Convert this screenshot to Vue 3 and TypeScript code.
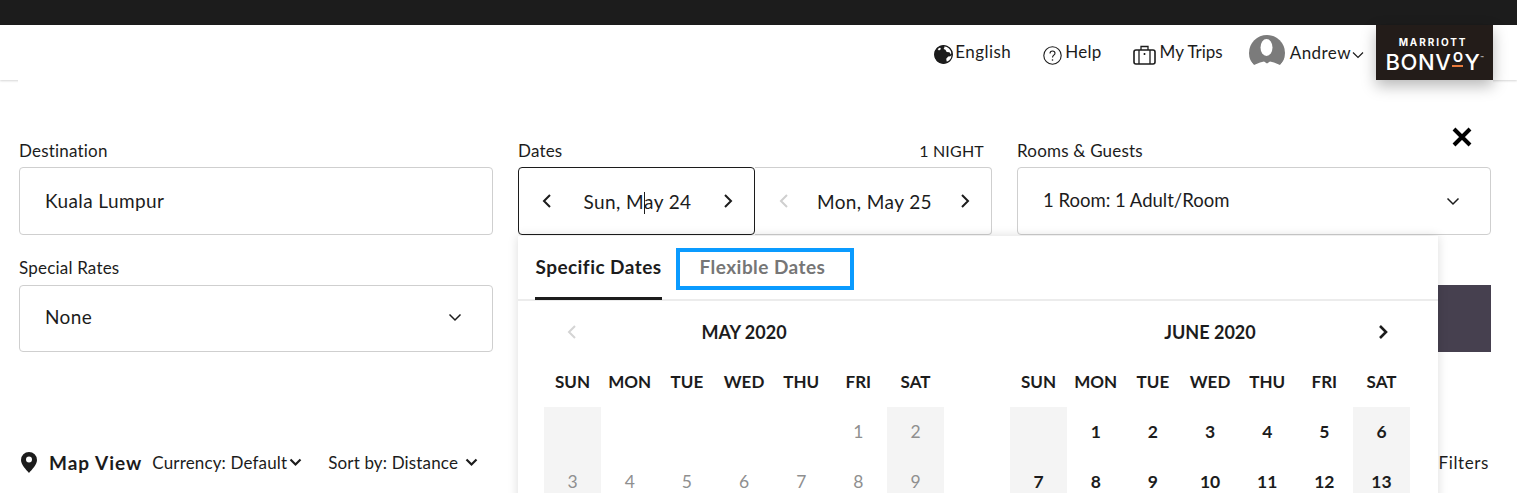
<script setup lang="ts">
const may: { d: string; we: boolean }[][] = [
  ['', '', '', '', '', '1', '2'],
  ['3', '4', '5', '6', '7', '8', '9'],
].map((r) => r.map((d, i) => ({ d, we: i === 0 || i === 6 })))
const june: { d: string; we: boolean }[][] = [
  ['', '1', '2', '3', '4', '5', '6'],
  ['7', '8', '9', '10', '11', '12', '13'],
].map((r) => r.map((d, i) => ({ d, we: i === 0 || i === 6 })))
const days = ['SUN', 'MON', 'TUE', 'WED', 'THU', 'FRI', 'SAT']
const months = [
  { name: 'MAY 2020', rows: may, past: true },
  { name: 'JUNE 2020', rows: june, past: false },
]
</script>

<template>
  <div class="page">
    <div class="topbar"></div>
    <header class="nav">
      <a class="nav-item globe-item">
        <svg class="ic" width="19" height="19" viewBox="0 0 19 19">
          <circle cx="9.500" cy="9.500" r="9.200" fill="#1c1c1c" />
          <path d="M10.500 1c3.500.6 6.300 3 7.400 6.200l-1 2.300-1.500-2.300-2.700-.3-1.300-2.200-1.800-.6.700-1.400z" fill="#fff" />
          <path d="M17.900 10c.2 2.800-1 5.300-3.200 7l-2-.4-.5-2.800 2-2.300 2.200-.3z" fill="#fff" />
          <path d="M3.500 4l2.500-1.500 1 1.500-2 1.500z" fill="#fff" />
          <circle cx="9.500" cy="9.500" r="8.800" fill="none" stroke="#1c1c1c" stroke-width="1.200" />
        </svg>
        <span class="t-en">English</span>
      </a>
      <a class="nav-item help-item">
        <svg class="ic help-ic" width="19" height="19" viewBox="0 0 19 19">
          <circle cx="9.500" cy="9.500" r="8.700" fill="none" stroke="#1c1c1c" stroke-width="1.100" />
          <path d="M7 7.400c0-1.500 1.100-2.400 2.500-2.400s2.500.9 2.500 2.200c0 2-2.500 2-2.500 4.300" fill="none" stroke="#1c1c1c" stroke-width="1.100" />
          <circle cx="9.500" cy="14" r=".8" fill="#1c1c1c" />
        </svg>
        <span>Help</span>
      </a>
      <a class="nav-item trips-item">
        <svg class="ic trips-ic" width="23" height="20" viewBox="0 0 23 20">
          <rect x="1" y="5" width="21" height="14" rx="2" fill="none" stroke="#1c1c1c" stroke-width="1.600" />
          <path d="M8 5V1.500h7V5M6 5v14M17 5v14" fill="none" stroke="#1c1c1c" stroke-width="1.300" />
          <rect x="10.700" y="8" width="1.600" height="2" fill="#1c1c1c" />
        </svg>
        <span class="t-trips">My Trips</span>
      </a>
      <a class="nav-item user-item">
        <svg class="avatar" width="36" height="36" viewBox="0 0 36 36">
          <defs>
            <clipPath id="av"><circle cx="18" cy="18" r="18" /></clipPath>
          </defs>
          <g clip-path="url(#av)">
            <path d="M0 0h36v24l-5 6-6-2.500-4-1-3 2-3-2-4 1-6 2.500-5-6z" fill="#7b7b7b" />
            <ellipse cx="17.500" cy="12.500" rx="6" ry="8.500" fill="#fff" />
          </g>
        </svg>
        <span class="user-name">Andrew</span>
        <svg class="user-chev" width="12" height="8" viewBox="0 0 12 8">
          <path d="M1 1.500l5 5 5-5" fill="none" stroke="#1c1c1c" stroke-width="1.200" />
        </svg>
      </a>
      <div class="logo">
        <span class="logo-top">MARRIOTT</span>
        <span class="logo-main">BONV<span class="logo-o">O</span>Y<span class="logo-tm">™</span></span>
      </div>
    </header>

    <main class="content">
      <button class="close" aria-label="Close">
        <svg width="22" height="20" viewBox="0 0 22 20">
          <path d="M3 2l16 16M19 2L3 18" stroke="#000" stroke-width="4" fill="none" />
        </svg>
      </button>

      <section class="form">
        <div class="field">
          <label class="label">Destination</label>
          <div class="box box-text">Kuala Lumpur</div>
        </div>
        <div class="field">
          <div class="label label-row"><span>Dates</span><span class="night">1 NIGHT</span></div>
          <div class="dates">
            <div class="date date-on">
              <svg class="ch" width="10" height="16" viewBox="0 0 10 16"><path d="M8 2L2 8l6 6" fill="none" stroke="#1c1c1c" stroke-width="2" /></svg>
              <span class="date-text">Sun, M<span class="caret"></span>ay 24</span>
              <svg class="ch" width="10" height="16" viewBox="0 0 10 16"><path d="M2 2l6 6-6 6" fill="none" stroke="#1c1c1c" stroke-width="2" /></svg>
            </div>
            <div class="date date-off">
              <svg class="ch" width="10" height="16" viewBox="0 0 10 16"><path d="M8 2L2 8l6 6" fill="none" stroke="#cfcfcf" stroke-width="2" /></svg>
              <span class="date-text">Mon, May 25</span>
              <svg class="ch" width="10" height="16" viewBox="0 0 10 16"><path d="M2 2l6 6-6 6" fill="none" stroke="#1c1c1c" stroke-width="2" /></svg>
            </div>
          </div>
        </div>
        <div class="field">
          <label class="label">Rooms &amp; Guests</label>
          <div class="box box-select rooms">
            <span>1 Room: 1 Adult/Room</span>
            <svg width="14" height="9" viewBox="0 0 14 9"><path d="M1.500 1.500L7 7l5.500-5.500" fill="none" stroke="#1c1c1c" stroke-width="1.500" /></svg>
          </div>
        </div>

        <div class="field field-2">
          <label class="label label-2">Special Rates</label>
          <div class="box box-select box-2">
            <span>None</span>
            <svg width="14" height="9" viewBox="0 0 14 9"><path d="M1.500 1.500L7 7l5.500-5.500" fill="none" stroke="#1c1c1c" stroke-width="1.500" /></svg>
          </div>
        </div>
        <div class="field-2 spacer"></div>
        <div class="field-2 submit-wrap"><div class="submit"></div></div>
      </section>

      <section class="filters">
        <svg class="pin" width="16" height="21" viewBox="0 0 16 21">
          <path d="M8 0a8 8 0 0 1 8 8c0 4.500-5 9.500-8 13-3-3.500-8-8.500-8-13a8 8 0 0 1 8-8z" fill="#1c1c1c" />
          <circle cx="8" cy="7.500" r="3" fill="#fff" />
        </svg>
        <strong class="map">Map View</strong>
        <span class="filter-a">Currency: Default</span>
        <svg class="fch" width="13" height="9" viewBox="0 0 13 9"><path d="M1.500 1.500l5 5 5-5" fill="none" stroke="#1c1c1c" stroke-width="2.200" /></svg>
        <span class="filter-b">Sort by: Distance</span>
        <svg class="fch fch-b" width="13" height="9" viewBox="0 0 13 9"><path d="M1.500 1.500l5 5 5-5" fill="none" stroke="#1c1c1c" stroke-width="2.200" /></svg>
        <span class="filter-c">Filters</span>
      </section>

      <div class="popup">
        <div class="tabs">
          <div class="tab tab-on">Specific Dates</div>
          <div class="tab tab-flex">Flexible Dates</div>
        </div>
        <div class="cal">
          <div v-for="(m, mi) in months" :key="m.name" class="month">
            <div class="month-head">
              <svg v-if="mi === 0" class="m-prev" width="10" height="16" viewBox="0 0 10 16"><path d="M8 2L2 8l6 6" fill="none" stroke="#d4d4d4" stroke-width="2" /></svg>
              <span>{{ m.name }}</span>
              <svg v-if="mi === 1" class="m-next" width="11" height="16" viewBox="0 0 11 16"><path d="M2 2l6 6-6 6" fill="none" stroke="#1c1c1c" stroke-width="2.600" /></svg>
            </div>
            <div class="grid">
              <div v-for="d in days" :key="d" class="wd">{{ d }}</div>
              <template v-for="(r, ri) in m.rows" :key="ri">
                <div
                  v-for="(c, ci) in r"
                  :key="ci"
                  class="day"
                  :class="{ we: c.we, past: m.past }"
                >{{ c.d }}</div>
              </template>
            </div>
          </div>
        </div>
      </div>
    </main>
  </div>
</template>

<style>
html, body { margin: 0; background: #fff; }
</style>

<style scoped>
.page {
  width: 1517px;
  height: 493px;
  overflow: hidden;
  position: relative;
  font-family: "Lato", "Open Sans", sans-serif;
  color: #1c1c1c;
  background: #fff;
}
.topbar { height: 25px; background: #1c1c1c; }
.nav {
  height: 55px;
  display: flex;
  justify-content: flex-end;
  align-items: flex-start;
  padding-right: 24px;
  background: #fff;
  box-shadow: 0 1px 2px rgba(0, 0, 0, 0.16);
  font-size: 17px;
  letter-spacing: 0.3px;
  position: relative;
}
.nav-item {
  display: flex;
  align-items: center;
  height: 56px;
  position: relative;
}
.ic { margin-right: 2px; margin-top: 3px; }
.nav-item span { position: relative; top: -2px; }
.t-en { letter-spacing: 0.45px; }
.t-trips { letter-spacing: 0; }
.globe-item { margin-right: 32px; }
.help-item { margin-right: 31px; }
.help-ic { margin-top: 4px; margin-right: 3px; }
.trips-item { margin-right: 26px; }
.trips-ic { margin-top: 4px; margin-right: 4px; }
.avatar { margin-right: 5px; }
.user-item { margin-right: 12px; }
.user-name { margin-top: 2px; letter-spacing: 0.45px; }
.user-chev { margin-left: 1px; margin-top: 3px; }
.logo {
  width: 117px;
  height: 55px;
  background: #231c19;
  color: #fff;
  display: flex;
  flex-direction: column;
  align-items: center;
  box-shadow: 0 6px 14px rgba(0, 0, 0, 0.28);
  position: relative;
  z-index: 3;
  font-family: "Inter", "Lato", sans-serif;
}
.logo-top {
  font-size: 10px;
  font-weight: 700;
  letter-spacing: 1.900px;
  line-height: 12px;
  margin-top: 11px;
  margin-left: -3px;
}
.logo-main {
  font-size: 22px;
  font-weight: 500;
  letter-spacing: 0.600px;
  line-height: 20px;
  height: 20px;
  margin-top: 4px;
  display: flex;
  align-items: flex-start;
}
.logo-o {
  font-size: 13px;
  font-weight: 700;
  line-height: 10px;
  height: 13px;
  border-bottom: 2.500px solid #e87a3d;
  margin: 0 1px;
  letter-spacing: 0;
  width: 11px;
  text-align: center;
}
.logo-tm { font-size: 5px; line-height: 10px; letter-spacing: 0; margin-top: 1px; }

.content {
  position: relative;
  margin: 0 24px 0 18px;
  height: 413px;
  background: #fff;
  z-index: 1;
}
.close {
  position: absolute;
  right: 20px;
  top: 47px;
  border: 0;
  background: none;
  padding: 0;
  width: 22px;
  height: 20px;
}
.form {
  display: grid;
  grid-template-columns: 474px 474px 474px;
  column-gap: 25px;
  padding: 61px 0 0 1px;
}
.label {
  display: block;
  font-size: 17px;
  letter-spacing: 0.2px;
  height: 26px;
  line-height: 20px;
}
.label-2 { height: 27px; }
.label-row { display: flex; justify-content: space-between; }
.night { margin-right: 8px; font-size: 16px; }
.box {
  border: 1px solid #cfcfcf;
  border-radius: 4px;
  box-sizing: border-box;
  height: 68px;
  font-size: 19px;
  letter-spacing: 0.4px;
  display: flex;
  align-items: center;
  padding: 0 25px 2px;
}
.box-select { justify-content: space-between; padding: 0 30px 3px 25px; }
.rooms { font-size: 18.500px; letter-spacing: 0; }
.box-2 { height: 67px; padding-bottom: 5px; }
.box-select svg { margin-top: 3px; }
.field-2 { margin-top: 23px; }
.dates { display: flex; height: 68px; }
.date {
  width: 237px;
  box-sizing: border-box;
  display: flex;
  align-items: center;
  justify-content: space-between;
  font-size: 19px;
  letter-spacing: 0.4px;
  padding: 0 21px 0 23px;
}
.date-on {
  border: 1px solid #1c1c1c;
  border-radius: 4px;
  position: relative;
  z-index: 1;
}
.date-off {
  border: 1px solid #cfcfcf;
  border-left: 0;
  border-radius: 0 4px 4px 0;
  padding-left: 24px;
}
.caret {
  display: inline-block;
  width: 1px;
  height: 22px;
  background: #1c1c1c;
  margin: -6px -1px -6px 0;
  vertical-align: 1px;
}
.submit-wrap { padding-top: 27px; }
.submit { height: 67px; background: #46404f; }
.filters {
  display: flex;
  align-items: center;
  margin-top: 98px;
  padding-left: 3px;
  font-size: 17px;
  letter-spacing: 0.15px;
  height: 24px;
}
.pin { margin-right: 12px; }
.map { font-size: 19px; font-weight: 700; letter-spacing: 1px; margin-right: 10px; }
.fch { margin-left: 2px; }
.filter-b { margin-left: 26px; }
.fch-b { margin-left: 7px; }
.filter-c { position: absolute; right: 4px; letter-spacing: 0.6px; }

.popup {
  position: absolute;
  left: 500px;
  top: 156px;
  width: 920px;
  height: 300px;
  background: #fff;
  box-shadow: 0 0 10px rgba(0, 0, 0, 0.14);
  z-index: 2;
}
.tabs {
  display: flex;
  height: 63px;
  border-bottom: 2px solid #ececec;
  padding-left: 17px;
  font-weight: 700;
  font-size: 19px;
  letter-spacing: 0.45px;
}
.tab {
  box-sizing: border-box;
  display: flex;
  align-items: center;
  white-space: nowrap;
}
.tab-on {
  width: 127px;
  height: 64px;
  padding-bottom: 1px;
  border-bottom: 3px solid #1c1c1c;
  justify-content: center;
}
.tab-flex {
  width: 178px;
  height: 42px;
  margin: 12px 0 0 14px;
  border: 4px solid #0a9bff;
  color: #767676;
  justify-content: center;
  padding: 0 5px 5px 0;
}
.cal {
  display: flex;
  padding-left: 26px;
}
.month { width: 400px; margin-right: 66px; }
.month-head {
  height: 60px;
  padding-top: 2px;
  box-sizing: border-box;
  display: flex;
  align-items: center;
  justify-content: center;
  font-size: 18px;
  font-weight: 700;
  position: relative;
}
.m-prev { position: absolute; left: 23px; top: 23px; }
.m-next { position: absolute; right: 21px; top: 23px; }
.grid {
  display: grid;
  grid-template-columns: repeat(7, 57.17px);
  grid-template-rows: 46px 50px 50px;
}
.wd {
  font-size: 17px;
  font-weight: 700;
  text-align: center;
  line-height: 41px;
}
.day {
  font-size: 17.500px;
  font-weight: 700;
  text-align: center;
  line-height: 50px;
}
.day.past { color: #8f8f8f; font-weight: 400; }
.day.we { background: #f4f4f4; }
</style>
